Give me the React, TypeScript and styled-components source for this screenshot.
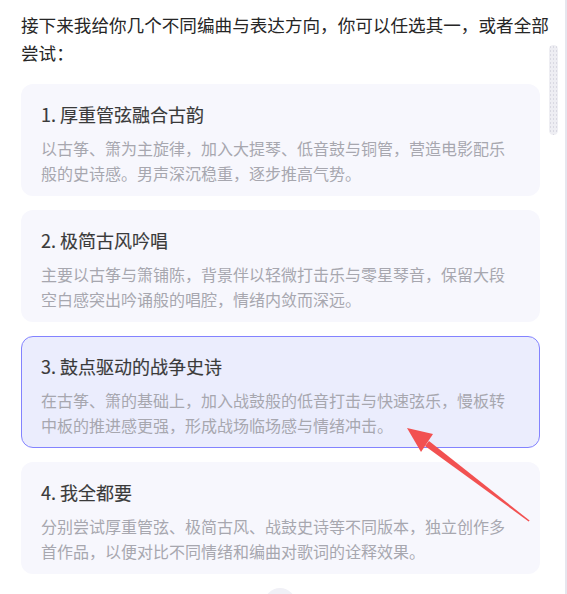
import styled, { createGlobalStyle } from "styled-components";

const GlobalStyle = createGlobalStyle`
    html, body {
        margin: 0;
        padding: 0;
        background: #fff;
    }
    body {
        font-family: "Noto Sans CJK SC", "Noto Sans", sans-serif;
    }
`

const Page = styled.div`
    position: relative;
    width: 567px;
    height: 594px;
    display: flex;
    overflow: hidden;
    background: #fff;
`

const Main = styled.div`
    width: 528px;
    padding: 11px 0 0 21px;
    display: flex;
    flex-direction: column;
    align-items: flex-start;
`

const Intro = styled.p`
    margin: 0 0 17px 0;
    width: 528px;
    font-size: 17.6px;
    line-height: 28px;
    color: #262626;
`

const CardList = styled.div`
    display: flex;
    flex-direction: column;
    gap: 14px;
`

const Card = styled.div<{ $active?: boolean }>`
    box-sizing: border-box;
    width: 519px;
    padding: 15px 19px 9px 19px;
    border-radius: 12px;
    border: 1px solid ${p => p.$active ? '#8383ff' : 'transparent'};
    background: ${p => p.$active ? '#ebedfd' : '#f7f7fd'};
`

const CardTitle = styled.div`
    font-size: 18px;
    line-height: 28px;
    font-weight: 400;
    color: #3a3a3a;
    -webkit-text-stroke: 0.15px #3a3a3a;
`

const CardText = styled.div`
    margin-top: 8px;
    font-size: 16px;
    line-height: 25px;
    color: #a7a7af;
`

const BottomButton = styled.div`
    width: 32px;
    height: 32px;
    border-radius: 50%;
    background: #f0f0f6;
    margin: 14px 0 0 243px;
    flex-shrink: 0;
`

const Rail = styled.div`
    width: 16px;
    padding-top: 45px;
`

const Thumb = styled.div`
    width: 9px;
    height: 90px;
    border-radius: 5px;
    background-color: #eeeef3;
    background-image: radial-gradient(#d9d9e2 0.8px, transparent 1px);
    background-size: 3px 4px;
`

const Edge = styled.div`
    width: 2px;
    height: 100%;
    background: #e6e6ee;
`

const ArrowLayer = styled.svg`
    position: absolute;
    left: 0;
    top: 0;
    pointer-events: none;
`

const options = [
    {
        title: '1. 厚重管弦融合古韵',
        text: '以古筝、箫为主旋律，加入大提琴、低音鼓与铜管，营造电影配乐般的史诗感。男声深沉稳重，逐步推高气势。',
    },
    {
        title: '2. 极简古风吟唱',
        text: '主要以古筝与箫铺陈，背景伴以轻微打击乐与零星琴音，保留大段空白感突出吟诵般的唱腔，情绪内敛而深远。',
    },
    {
        title: '3. 鼓点驱动的战争史诗',
        text: '在古筝、箫的基础上，加入战鼓般的低音打击与快速弦乐，慢板转中板的推进感更强，形成战场临场感与情绪冲击。',
        active: true,
    },
    {
        title: '4. 我全都要',
        text: '分别尝试厚重管弦、极简古风、战鼓史诗等不同版本，独立创作多首作品，以便对比不同情绪和编曲对歌词的诠释效果。',
    },
]

export default function App() {
    return (
        <>
            <GlobalStyle />
            <Page>
                <Main>
                    <Intro>接下来我给你几个不同编曲与表达方向，你可以任选其一，或者全部尝试：</Intro>
                    <CardList>
                        {options.map(o => (
                            <Card key={o.title} $active={o.active}>
                                <CardTitle>{o.title}</CardTitle>
                                <CardText>{o.text}</CardText>
                            </Card>
                        ))}
                    </CardList>
                    <BottomButton />
                </Main>
                <Rail>
                    <Thumb />
                </Rail>
                <Edge />
                <ArrowLayer width="567" height="594" viewBox="0 0 567 594">
                    <polygon points="407,428 421,452 433,434" fill="#f25151" />
                    <polygon points="429,441 425,446 528.6,521.4 529.6,520.6" fill="#f25151" />
                </ArrowLayer>
            </Page>
        </>
    )
}
